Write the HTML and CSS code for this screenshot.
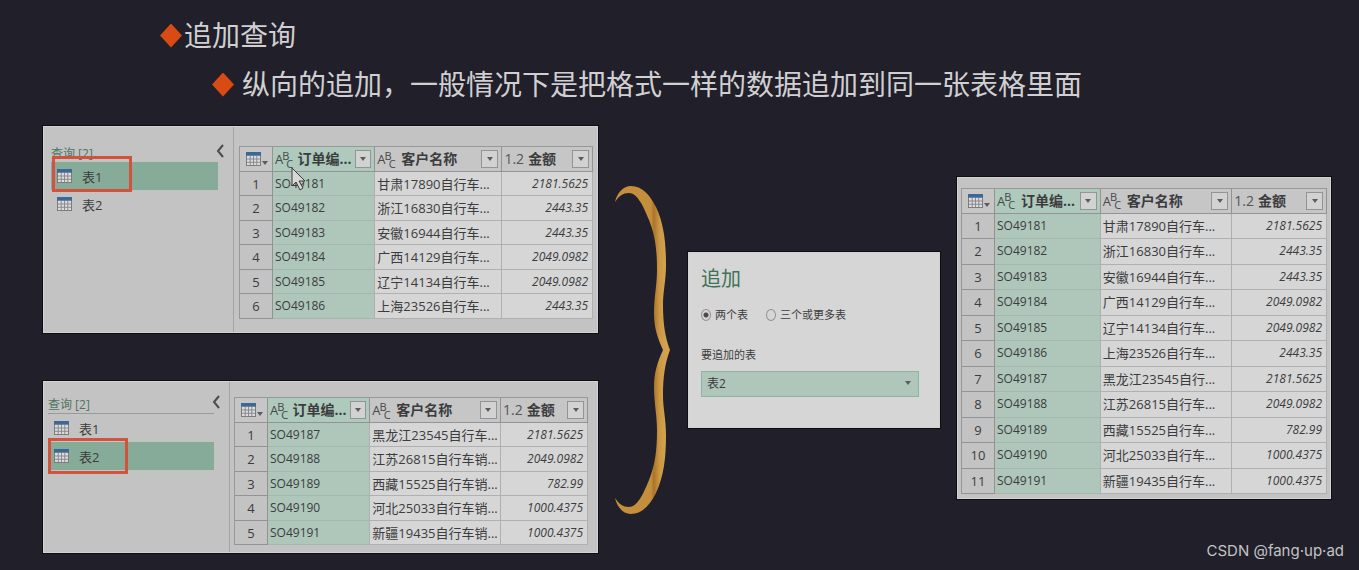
FILE: index.html
```html
<!DOCTYPE html>
<html lang="zh-CN">
<head>
  <meta charset="UTF-8">
  <meta name="viewport" content="width=device-width, initial-scale=1.0">
  <title>追加查询</title>
  <link rel="stylesheet" href="styles.css">
</head>
<body>
  <svg class="defs" aria-hidden="true">
    <symbol id="icon-table" viewBox="0 0 16 15">
      <rect x="0.5" y="0.5" width="15" height="14" fill="#dcdcdc" stroke="#77777b"/>
      <path d="M1 7.5h14M1 11h14M4.5 4v10M8 4v10M11.5 4v10" stroke="#85858a" fill="none"/>
      <rect x="0" y="0" width="16" height="4" fill="#3f6794"/>
    </symbol>
    <symbol id="icon-back" viewBox="0 0 8 14">
      <path d="M7 1L2 7l5 6" fill="none" stroke="#4c4c4e" stroke-width="2"/>
    </symbol>
  </svg>

  <header class="slide-title">
    <h1><span class="diamond"></span>追加查询</h1>
    <h2><span class="diamond"></span>纵向的追加，一般情况下是把格式一样的数据追加到同一张表格里面</h2>
  </header>

  <main class="flow">
    <div class="sources">
      <section class="pane pane-first">
        <nav class="queries">
          <div class="queries-head">
            <span>查询 [2]</span>
            <button class="back" type="button" aria-label="折叠"><svg><use href="#icon-back"/></svg></button>
          </div>
          <a class="query selected" href="#t1"><svg class="icon"><use href="#icon-table"/></svg>表1<span class="mark"></span></a>
          <a class="query" href="#t2"><svg class="icon"><use href="#icon-table"/></svg>表2</a>
        </nav>
        <div class="grid">
          <table id="t1">
            <colgroup><col class="c-index"><col class="c-order"><col class="c-name"><col></colgroup>
            <thead>
              <tr>
                <th><div class="corner"><svg class="icon"><use href="#icon-table"/></svg><i class="caret"></i></div></th>
                <th class="key"><div class="head"><span class="abc">A<sup>B</sup><sub>C</sub></span><b>订单编...</b><button class="filter" type="button" aria-label="筛选"></button></div></th>
                <th><div class="head"><span class="abc">A<sup>B</sup><sub>C</sub></span><b>客户名称</b><button class="filter" type="button" aria-label="筛选"></button></div></th>
                <th><div class="head"><span class="num">1.2</span><b>金额</b><button class="filter" type="button" aria-label="筛选"></button></div></th>
              </tr>
            </thead>
            <tbody>
              <tr><th>1</th><td>SO49181</td><td>甘肃17890自行车...</td><td>2181.5625</td></tr>
              <tr><th>2</th><td>SO49182</td><td>浙江16830自行车...</td><td>2443.35</td></tr>
              <tr><th>3</th><td>SO49183</td><td>安徽16944自行车...</td><td>2443.35</td></tr>
              <tr><th>4</th><td>SO49184</td><td>广西14129自行车...</td><td>2049.0982</td></tr>
              <tr><th>5</th><td>SO49185</td><td>辽宁14134自行车...</td><td>2049.0982</td></tr>
              <tr><th>6</th><td>SO49186</td><td>上海23526自行车...</td><td>2443.35</td></tr>
            </tbody>
          </table>
          <svg class="pointer" viewBox="0 0 16 24">
            <path d="M1 1v18l4-4 4 8 3-2-4-7h6z" fill="#d8d8d8" stroke="#3c3c3c"/>
          </svg>
        </div>
      </section>

      <section class="pane pane-second">
        <nav class="queries">
          <div class="queries-head">
            <span>查询 [2]</span>
            <button class="back" type="button" aria-label="折叠"><svg><use href="#icon-back"/></svg></button>
          </div>
          <a class="query" href="#t1"><svg class="icon"><use href="#icon-table"/></svg>表1</a>
          <a class="query selected" href="#t2"><svg class="icon"><use href="#icon-table"/></svg>表2<span class="mark"></span></a>
        </nav>
        <div class="grid">
          <table id="t2">
            <colgroup><col class="c-index"><col class="c-order"><col class="c-name"><col></colgroup>
            <thead>
              <tr>
                <th><div class="corner"><svg class="icon"><use href="#icon-table"/></svg><i class="caret"></i></div></th>
                <th class="key"><div class="head"><span class="abc">A<sup>B</sup><sub>C</sub></span><b>订单编...</b><button class="filter" type="button" aria-label="筛选"></button></div></th>
                <th><div class="head"><span class="abc">A<sup>B</sup><sub>C</sub></span><b>客户名称</b><button class="filter" type="button" aria-label="筛选"></button></div></th>
                <th><div class="head"><span class="num">1.2</span><b>金额</b><button class="filter" type="button" aria-label="筛选"></button></div></th>
              </tr>
            </thead>
            <tbody>
              <tr><th>1</th><td>SO49187</td><td>黑龙江23545自行车...</td><td>2181.5625</td></tr>
              <tr><th>2</th><td>SO49188</td><td>江苏26815自行车销...</td><td>2049.0982</td></tr>
              <tr><th>3</th><td>SO49189</td><td>西藏15525自行车销...</td><td>782.99</td></tr>
              <tr><th>4</th><td>SO49190</td><td>河北25033自行车销...</td><td>1000.4375</td></tr>
              <tr><th>5</th><td>SO49191</td><td>新疆19435自行车销...</td><td>1000.4375</td></tr>
            </tbody>
          </table>
        </div>
      </section>
    </div>

    <svg class="brace" viewBox="0 0 56 330" aria-hidden="true">
      <defs>
        <linearGradient id="gold" gradientUnits="userSpaceOnUse" x1="36" y1="0" x2="50" y2="0">
          <stop offset="0" stop-color="#c48e3c"/>
          <stop offset="0.2" stop-color="#ab7429"/>
          <stop offset="0.6" stop-color="#cb9743"/>
          <stop offset="1" stop-color="#d3a250"/>
        </linearGradient>
      </defs>
      <path id="half" fill="url(#gold)" d="M0 17C2 8 8 1 16 1C27 1 35 10 41 22C49 39 51 58 51 80C51 96 48 106 48 120C48 138 50 152 55 165H48C42 152 39 142 39 128C39 112 42 100 42 85C42 64 40 50 34 35C28 20 22 8 14 8C8 8 4 11 0 17Z"/>
      <use href="#half" transform="matrix(1 0 0 -1 0 330)"/>
    </svg>

    <form class="pane dialog">
      <h3>追加</h3>
      <div class="choices">
        <label><input type="radio" name="count" checked>两个表</label>
        <label><input type="radio" name="count">三个或更多表</label>
      </div>
      <label class="field-label" for="target">要追加的表</label>
      <div class="select">
        <select id="target">
          <option>表2</option>
        </select>
        <i class="caret"></i>
      </div>
    </form>

    <section class="pane result">
      <table>
        <colgroup><col class="c-index"><col class="c-order"><col class="c-name"><col></colgroup>
        <thead>
          <tr>
            <th><div class="corner"><svg class="icon"><use href="#icon-table"/></svg><i class="caret"></i></div></th>
            <th class="key"><div class="head"><span class="abc">A<sup>B</sup><sub>C</sub></span><b>订单编...</b><button class="filter" type="button" aria-label="筛选"></button></div></th>
            <th><div class="head"><span class="abc">A<sup>B</sup><sub>C</sub></span><b>客户名称</b><button class="filter" type="button" aria-label="筛选"></button></div></th>
            <th><div class="head"><span class="num">1.2</span><b>金额</b><button class="filter" type="button" aria-label="筛选"></button></div></th>
          </tr>
        </thead>
        <tbody>
          <tr><th>1</th><td>SO49181</td><td>甘肃17890自行车...</td><td>2181.5625</td></tr>
          <tr><th>2</th><td>SO49182</td><td>浙江16830自行车...</td><td>2443.35</td></tr>
          <tr><th>3</th><td>SO49183</td><td>安徽16944自行车...</td><td>2443.35</td></tr>
          <tr><th>4</th><td>SO49184</td><td>广西14129自行车...</td><td>2049.0982</td></tr>
          <tr><th>5</th><td>SO49185</td><td>辽宁14134自行车...</td><td>2049.0982</td></tr>
          <tr><th>6</th><td>SO49186</td><td>上海23526自行车...</td><td>2443.35</td></tr>
          <tr><th>7</th><td>SO49187</td><td>黑龙江23545自行...</td><td>2181.5625</td></tr>
          <tr><th>8</th><td>SO49188</td><td>江苏26815自行车...</td><td>2049.0982</td></tr>
          <tr><th>9</th><td>SO49189</td><td>西藏15525自行车...</td><td>782.99</td></tr>
          <tr><th>10</th><td>SO49190</td><td>河北25033自行车...</td><td>1000.4375</td></tr>
          <tr><th>11</th><td>SO49191</td><td>新疆19435自行车...</td><td>1000.4375</td></tr>
        </tbody>
      </table>
    </section>
  </main>

  <div class="watermark">CSDN @fang·up·ad</div>
</body>
</html>
```
FILE: styles.css
```css
* {
  box-sizing: border-box;
}
body {
  margin: 0;
  min-height: 100vh;
  position: relative;
  background-color: #211f2a;
  color: #3c3c3e;
  font-family: "Open Sans", "Noto Sans CJK SC", sans-serif;
  font-size: 13px;
}
.defs {
  display: block;
  width: 0;
  height: 0;
}

/* titles */
.slide-title {
  padding: 11px 0 17px 160px;
  color: #d0d0d2;
}
.slide-title h1,
.slide-title h2 {
  display: flex;
  align-items: center;
  margin: 0;
  font-size: 28px;
  font-weight: 400;
  line-height: 49px;
}
.slide-title h1 {
  gap: 2px;
}
.slide-title h2 {
  gap: 8px;
  padding-left: 52px;
}
.diamond {
  width: 22px;
  height: 24px;
  background-color: #d94a14;
  clip-path: polygon(50% 0, 100% 50%, 50% 100%, 0 50%);
}

/* columns */
.flow {
  display: grid;
  grid-template-columns: 555fr 56px 252fr 374fr;
  gap: 17px;
  align-items: center;
  padding: 0 28px 16px 43px;
}
.sources {
  display: grid;
  gap: 48px;
}
.pane {
  background-color: #c3c3c3;
  border: 1px solid #d2d2d2;
  outline: 1px solid #0e0d12;
}
.pane-first,
.pane-second {
  display: grid;
  grid-template-columns: 190px 1fr;
}
.pane-second {
  grid-template-columns: 186px 1fr;
}
.brace {
  width: 56px;
  margin-top: 20px;
}

/* query list */
.queries {
  border-right: 1px solid #a4a4a6;
  padding: 16px 15px 0 7px;
}
.pane-second .queries {
  padding: 12px 15px 0 4px;
}
.queries-head {
  display: flex;
  justify-content: space-between;
  align-items: center;
  height: 19px;
  color: #4d7561;
  font-size: 12px;
}
.pane-second .queries-head {
  height: 20px;
  border-bottom: 1px solid #9a9a9c;
}
.back {
  display: flex;
  margin: 0 -6px 4px 0;
  padding: 0;
  border: 0;
  background: none;
  cursor: pointer;
}
.back svg {
  width: 8px;
  height: 14px;
}
.query {
  display: flex;
  align-items: center;
  gap: 10px;
  position: relative;
  height: 28px;
  padding-left: 6px;
  color: inherit;
  text-decoration: none;
}
.selected {
  background-color: #86ac99;
}
.mark {
  position: absolute;
  left: 1px;
  top: -6px;
  width: 80px;
  height: 36px;
  border: 3px solid #d2523e;
}
.pane-second .mark {
  left: 0;
  top: -4px;
}
.icon {
  width: 15px;
  height: 14px;
}

/* data tables */
.grid {
  position: relative;
  padding: 19px 4px 13px 5px;
}
.pane-second .grid {
  padding: 15px 9px 7px 4px;
}
.result {
  margin-bottom: 4px;
  padding: 10px 3px 4px;
}
table {
  width: 100%;
  table-layout: fixed;
  border-collapse: separate;
  border-spacing: 0;
  border-left: 1px solid #98989a;
  border-top: 1px solid #98989a;
}
.c-index {
  width: 33px;
}
.c-order {
  width: 29%;
}
.c-name {
  width: 36%;
}
.pane-second .c-name {
  width: 37%;
}
th,
td {
  height: 24px;
  padding: 0;
  border-right: 1px solid #b0b0b0;
  border-bottom: 1px solid #b0b0b0;
  line-height: 16px;
  white-space: nowrap;
}
tr:nth-child(even) > * {
  height: 25px;
}
.result tr > * {
  height: 25px;
}
.result tr:nth-child(even) > * {
  height: 26px;
}
th {
  border-color: #939395;
  font-weight: 400;
}
tbody th {
  font-size: 13px;
}
thead th {
  height: 25px;
  background-color: #c6c6c6;
}
thead .key {
  background-color: #adcabd;
}
td {
  background-color: #d6d6d6;
  padding-left: 2px;
}
td:nth-child(2) {
  background-color: #afc6bb;
  border-bottom-color: #a5b8ae;
  font-size: 12px;
}
td:last-child {
  padding-right: 4px;
  font-size: 12px;
  font-style: italic;
  text-align: right;
}
.corner,
.head {
  display: flex;
  align-items: center;
  height: 23px;
}
.corner {
  padding-left: 6px;
  gap: 1px;
}
.head {
  padding: 0 3px 0 2px;
  gap: 4px;
  font-size: 14px;
}
.head b {
  flex: 1;
  text-align: left;
}
.abc {
  display: flex;
  align-items: center;
  width: 20px;
  color: #48484a;
  font-size: 13px;
  line-height: 12px;
}
.abc sup,
.abc sub {
  font-size: 11px;
  line-height: 11px;
}
.abc sup {
  margin: 0 -3px 8px -1px;
}
.abc sub {
  margin-top: 8px;
}
.num {
  color: #555557;
}
.caret,
.filter::after {
  content: "";
  border: 3px solid transparent;
  border-top: 4px solid #5c5c5e;
  border-bottom: 0;
}
.corner .caret {
  margin-top: 8px;
}
.filter {
  display: flex;
  align-items: center;
  justify-content: center;
  width: 17px;
  height: 18px;
  padding: 0;
  border: 1px solid #949496;
  background-color: #d2d2d2;
  cursor: pointer;
}
.pointer {
  position: absolute;
  left: 57px;
  top: 40px;
  width: 16px;
  height: 24px;
}

/* append dialog */
.dialog {
  padding: 10px 20px 30px 12px;
  background-color: #d6d6d6;
}
.dialog h3 {
  margin: 0;
  color: #3f7259;
  font-size: 20px;
  font-weight: 400;
  line-height: 32px;
}
.choices {
  display: flex;
  gap: 18px;
  margin: 11px 0 22px;
  font-size: 11px;
  line-height: 18px;
}
.choices label {
  display: flex;
  align-items: center;
  gap: 4px;
}
.choices input {
  appearance: none;
  width: 10px;
  height: 12px;
  margin: 0;
  border: 1px solid #919193;
  border-radius: 50%;
}
.choices input:checked {
  background: radial-gradient(circle, #4a4a4c 2px, transparent 3px);
}
.field-label {
  display: block;
  font-size: 11px;
  line-height: 18px;
}
.select {
  position: relative;
  margin-top: 7px;
}
.select select {
  appearance: none;
  display: block;
  width: 100%;
  height: 26px;
  padding: 0 5px;
  border: 1px solid #8fb3a2;
  border-radius: 0;
  background-color: #afc6bb;
  color: inherit;
  font: inherit;
  font-size: 12px;
}
.select .caret {
  position: absolute;
  right: 8px;
  top: 10px;
}

.watermark {
  position: absolute;
  right: 15px;
  bottom: 8px;
  color: #c4c4c6;
  font-family: Inter, sans-serif;
  font-size: 15px;
  line-height: 22px;
}
```
